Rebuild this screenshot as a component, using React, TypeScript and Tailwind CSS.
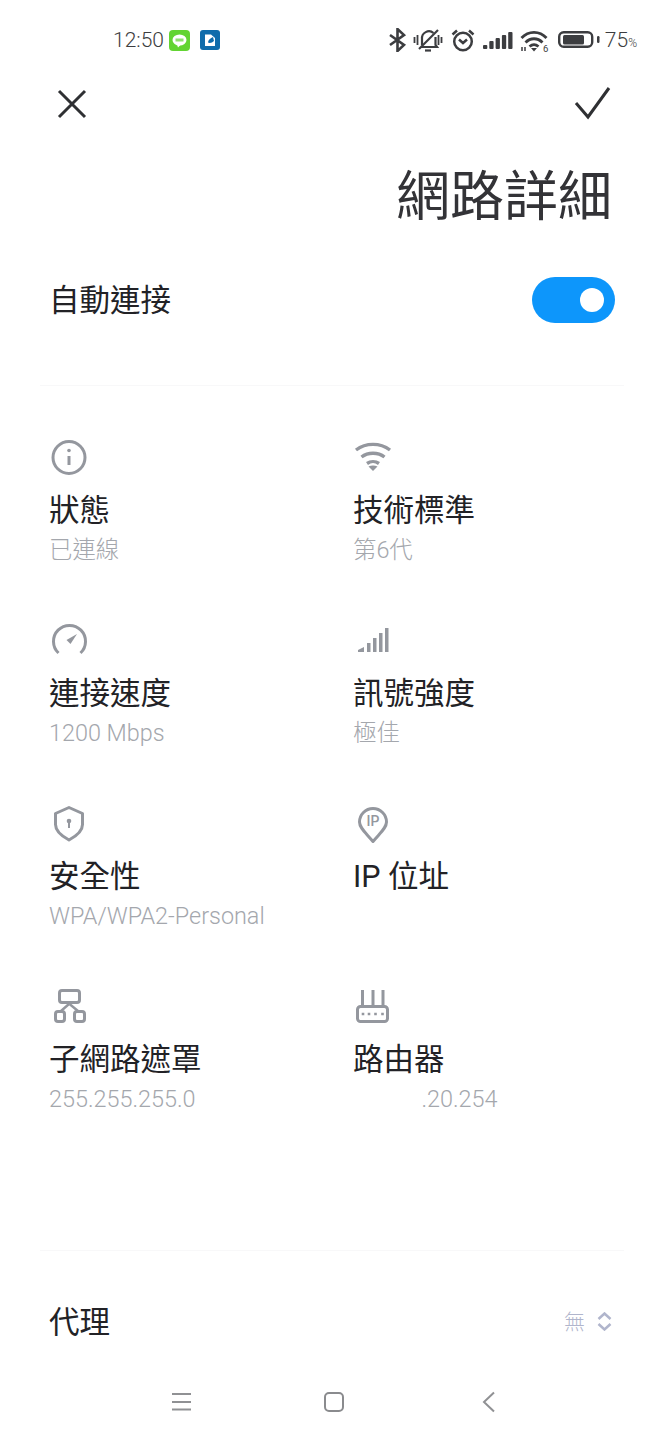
import type { ReactNode } from "react";

const font = "font-['Roboto','Noto_Sans_CJK_TC',sans-serif]";

function StatusBar() {
  return (
    <div className="h-20 flex items-center pl-[113px] pr-[27px] text-[#3c3d40]">
      <span className="text-[21px] leading-none font-light">12:50</span>
      <svg width="21" height="21" viewBox="0 0 21 21" className="ml-[5px]">
        <rect width="21" height="21" rx="4" fill="#62d432" />
        <ellipse cx="10.5" cy="10" rx="7" ry="5.600" fill="#fff" />
        <path d="M8 14.500l1 3 3-3z" fill="#fff" />
        <rect x="6.500" y="8.500" width="8" height="3" fill="#8fdf6f" />
      </svg>
      <svg width="20" height="20" viewBox="0 0 20 20" className="ml-[10px]">
        <rect width="20" height="20" rx="3" fill="#0f6cab" />
        <path d="M5 4.500h6l4 3.500v8H5z" fill="#fff" />
        <path d="M8 12.500c0-2.500 2.500-4.500 5-5.500l1 4c-2 2-4.500 2.500-6 1.500z" fill="#0f6cab" />
      </svg>
      <div className="ml-auto flex items-center">
        <svg width="20" height="24" viewBox="0 0 20 24" fill="none" stroke="#3c3d40" strokeWidth="2.600">
          <path d="M3 7l14 10-6.500 6V1L17 7 3 17" />
        </svg>
        <svg width="30" height="24" viewBox="0 0 30 24" fill="none" stroke="#3c3d40" strokeWidth="2.200" className="ml-[6px]">
          <path d="M9 17v-6a7 7 0 0 1 11.500-6M22.500 9v8l1.500 2H8" />
          <path d="M6 21L25 2" />
          <path d="M12 22.500h6" />
          <path d="M1.500 9v6M4.500 7v10M25.500 7v10M28.500 9v6" strokeWidth="1.800" />
        </svg>
        <svg width="26" height="24" viewBox="0 0 26 24" fill="none" stroke="#3c3d40" strokeWidth="2.500" className="ml-[7px]">
          <circle cx="13" cy="13.500" r="8.800" />
          <path d="M9 11.500l4 3.500 4-3.500M2.500 6.500l4.500-4M23.500 6.500l-4.500-4" />
        </svg>
        <svg width="30" height="20" viewBox="0 0 30 20" fill="#3c3d40" className="ml-[7px]">
          <rect x="0" y="15" width="4.300" height="4" rx="1" />
          <rect x="6.300" y="11" width="4.300" height="8" rx="1" />
          <rect x="12.600" y="8" width="4.300" height="11" rx="1" />
          <rect x="18.900" y="5" width="4.300" height="14" rx="1" />
          <rect x="25.200" y="2" width="4.300" height="17" rx="1" />
        </svg>
        <svg width="30" height="24" viewBox="0 0 30 24" fill="none" stroke="#3c3d40" strokeWidth="2.800" className="ml-[7px]">
          <path d="M1.500 10c7-7.500 18-7.500 25 0M5.500 14.500c5-5 12-5 17 0M9.500 18.500c3-2.500 6-2.500 9 0" />
          <path d="M14 23.500l-3-3.500h6z" fill="#3c3d40" stroke="none" />
          <path d="M2 19v4M5 19v4" strokeWidth="1.500" />
          <text x="23" y="23.500" fontSize="9.500" fill="#3c3d40" stroke="none" fontFamily="Roboto">6</text>
        </svg>
        <svg width="42" height="20" viewBox="0 0 42 20" fill="none" className="ml-[8px]">
          <rect x="1.200" y="2.200" width="33" height="14.600" rx="4.500" stroke="#3c3d40" strokeWidth="2.400" />
          <rect x="5" y="5" width="21" height="9.500" rx="1.500" fill="#3c3d40" />
          <rect x="39" y="6" width="2.500" height="7" rx="1.200" fill="#3c3d40" />
        </svg>
        <span className="ml-[5px] text-[21px] leading-none font-light">
          75<span className="text-[12px]">%</span>
        </span>
      </div>
    </div>
  );
}

function InfoCell({ icon, label, sub }: { icon: ReactNode; label: string; sub?: string }) {
  return (
    <div className="h-[183px]">
      <div className="h-10 flex items-center">{icon}</div>
      <div className="mt-[13px] h-10 flex items-center text-[30.500px] leading-none text-[#222226]">
        {label}
      </div>
      {sub && (
        <div className="h-10 flex items-center text-[23.400px] leading-none text-[#a4a7ad] font-light whitespace-pre">
          {sub}
        </div>
      )}
    </div>
  );
}

const stroke = { fill: "none", stroke: "#94979e", strokeWidth: 3 };

const icons = {
  info: (
    <svg width="40" height="40" viewBox="0 0 40 40" {...stroke}>
      <circle cx="20" cy="19.500" r="16" />
      <path d="M20 18v9" />
      <circle cx="20" cy="12.500" r="1.800" fill="#94979e" stroke="none" />
    </svg>
  ),
  wifi: (
    <svg width="40" height="40" viewBox="0 0 40 40" {...stroke} strokeWidth={3.4}>
      <path d="M3 12c10-7.500 24-7.500 34 0M8.500 19c6.500-5 16.500-5 23 0M14 25.500c3.500-2.500 8.500-2.500 12 0" />
      <path d="M20 33l-4.500-4.500c2.800-1.400 6.200-1.400 9 0z" fill="#94979e" stroke="none" />
    </svg>
  ),
  gauge: (
    <svg width="40" height="40" viewBox="0 0 40 40" {...stroke}>
      <path d="M9.500 32a16 16 0 1 1 22 0" />
      <path d="M17.500 19l10.500-6-6.500 10z" fill="#94979e" stroke="none" />
    </svg>
  ),
  signal: (
    <svg width="40" height="40" viewBox="0 0 40 40" fill="#94979e">
      <path d="M5 31v-2l6-3v5z" />
      <rect x="14" y="22" width="3.500" height="9" />
      <rect x="20" y="17" width="3.500" height="14" />
      <rect x="26" y="12" width="3.500" height="19" />
      <rect x="32" y="7" width="3.500" height="24" />
    </svg>
  ),
  shield: (
    <svg width="40" height="40" viewBox="0 0 40 40" {...stroke}>
      <path d="M20 3.500l13.500 6v11c0 6-6 11.500-13.500 15.500C12.500 32 6.500 26.500 6.500 20.500v-11z" strokeLinejoin="round" />
      <circle cx="20" cy="17" r="2.300" fill="#94979e" stroke="none" />
      <rect x="19" y="17" width="2" height="7" fill="#94979e" stroke="none" />
    </svg>
  ),
  ip: (
    <svg width="40" height="40" viewBox="0 0 40 40" {...stroke}>
      <path d="M20 37.500C13 29 6.500 24 6.500 18a13.500 13.500 0 0 1 27 0c0 6-6.500 11-13.500 19.500z" strokeLinejoin="round" />
      <text x="20" y="22" fontSize="14" fontWeight="500" fontFamily="Roboto" textAnchor="middle" fill="#94979e" stroke="none">IP</text>
    </svg>
  ),
  subnet: (
    <svg width="40" height="40" viewBox="0 0 40 40" {...stroke}>
      <rect x="10.500" y="3.500" width="20" height="12" rx="2.500" />
      <rect x="6.500" y="24.500" width="9" height="10" rx="2.500" />
      <rect x="25.500" y="24.500" width="10" height="10" rx="2.500" />
      <path d="M20 17l-8 7M20.500 17l8.500 7" strokeWidth="2.400" />
    </svg>
  ),
  router: (
    <svg width="40" height="40" viewBox="0 0 40 40" {...stroke}>
      <rect x="4.500" y="19.500" width="30" height="15" rx="3" />
      <path d="M9.500 3v16M20 3v16M30 3v16" />
      <path d="M8.700 27h2.600M14.700 27h2.600M21.200 27h2.600M28.200 27h2.600" strokeWidth="2.500" />
    </svg>
  ),
};

export default function App() {
  return (
    <div className={`w-[664px] h-[1440px] bg-white flex flex-col overflow-hidden ${font}`}>
      <StatusBar />

      <div className="h-12 pl-[52px] pr-[51px] flex items-center justify-between">
        <svg width="40" height="40" viewBox="0 0 40 40" fill="none" stroke="#2f3033" strokeWidth="3">
          <path d="M7 7l26 26M33 7L7 33" />
        </svg>
        <svg width="40" height="40" viewBox="0 0 40 40" fill="none" stroke="#2f3033" strokeWidth="3">
          <path d="M3 19l12 14L36 4" />
        </svg>
      </div>

      <div className="mt-[36px] h-[68px] pr-[52px] flex items-center justify-end text-[54px] leading-none text-[#333337]">
        網路詳細
      </div>

      <div className="mt-[45px] h-[46px] pl-[49px] pr-[49px] flex items-center justify-between">
        <span className="translate-y-px text-[30.500px] leading-none text-[#222226]">自動連接</span>
        <div className="w-[83px] h-[46px] rounded-full bg-[#0d96fb] flex items-center justify-end pr-[11px]">
          <div className="w-[24px] h-[24px] rounded-full bg-white" />
        </div>
      </div>

      <div className="mt-[62px] mx-10 h-px bg-[#f8f8f9]" />

      <div className="mt-[52px] pl-[49px] grid grid-cols-[304px_1fr]">
        <InfoCell icon={icons.info} label="狀態" sub="已連線" />
        <InfoCell icon={icons.wifi} label="技術標準" sub="第6代" />
        <InfoCell icon={icons.gauge} label="連接速度" sub="1200 Mbps" />
        <InfoCell icon={icons.signal} label="訊號強度" sub="極佳" />
        <InfoCell icon={icons.shield} label="安全性" sub="WPA/WPA2-Personal" />
        <InfoCell icon={icons.ip} label="IP 位址" />
        <InfoCell icon={icons.subnet} label="子網路遮罩" sub="255.255.255.0" />
        <InfoCell icon={icons.router} label="路由器" sub="            .20.254" />
      </div>

      <div className="mt-[80px] mx-10 h-px bg-[#f8f8f9]" />

      <div className="mt-[51px] h-10 pl-[49px] pr-[52px] flex items-center justify-between">
        <span className="translate-y-px text-[30.500px] leading-none text-[#222226]">代理</span>
        <div className="flex items-center">
          <span className="text-[21px] leading-none text-[#b0b5cc] font-light">無</span>
          <svg width="15" height="19" viewBox="0 0 15 19" fill="none" stroke="#b0b5cc" strokeWidth="2.500" className="ml-[12px] -translate-y-px">
            <path d="M1.500 7l6-5.500 6 5.500M1.500 12l6 5.500 6-5.500" />
          </svg>
        </div>
      </div>

      <div className="mt-[48px] h-[24px] flex items-center pl-[171px]">
        <svg width="20" height="20" viewBox="0 0 20 20" fill="none" stroke="#909194" strokeWidth="2">
          <path d="M1 2h19M1 10h19M1 17.500h19" />
        </svg>
        <svg width="20" height="20" viewBox="0 0 20 20" fill="none" stroke="#8a8b8e" strokeWidth="2" className="ml-[133px]">
          <rect x="1" y="1" width="18" height="18" rx="4" />
        </svg>
        <svg width="14" height="22" viewBox="0 0 14 22" fill="none" stroke="#909194" strokeWidth="2" className="ml-[138px]">
          <path d="M12 1.500L2 11l10 9.500" />
        </svg>
      </div>
    </div>
  );
}
